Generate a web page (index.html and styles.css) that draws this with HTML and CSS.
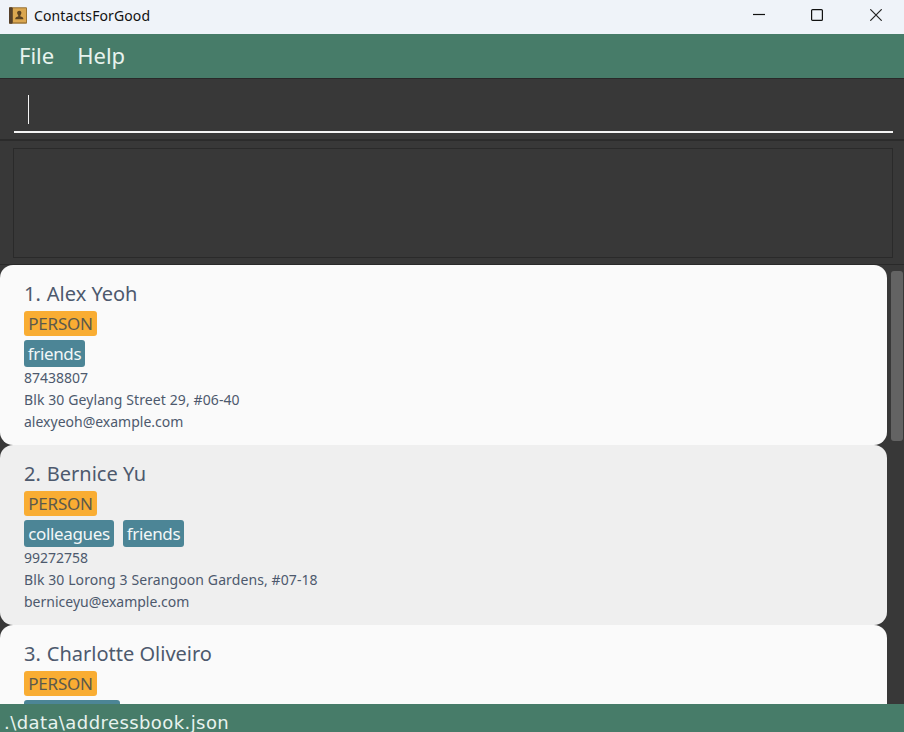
FILE: index.html
```html
<!DOCTYPE html>
<html lang="en">
<head>
<meta charset="utf-8">
<title>ContactsForGood</title>
<link rel="stylesheet" href="styles.css">
</head>
<body>
<div class="window">
  <header class="titlebar">
    <svg class="app-icon" width="18" height="17" viewBox="0 0 18 17">
      <rect x="0" y="0.3" width="18" height="16.4" rx="1" fill="#9c7434"/>
      <rect x="0" y="0.3" width="3.6" height="16.4" rx="1" fill="#55402b"/>
      <rect x="4" y="1.3" width="13" height="14" fill="#dba750"/>
      <path d="M10.300 3.800c1.500 0 2.200 1 2.100 2.300-.1 1-.6 1.700-1 2.100v1.300c1.700.4 3 .9 3 2.800H6.200c0-1.900 1.300-2.400 3-2.800V8.200c-.5-.4-1-1.100-1.100-2.100-.1-1.300.7-2.300 2.200-2.300z" fill="#5c4322"/>
    </svg>
    <span class="title">ContactsForGood</span>
    <div class="controls">
      <svg width="12" height="12" viewBox="0 0 12 12"><path d="M0 5.500h12" stroke="#111" stroke-width="1.200"/></svg>
      <svg width="12" height="12" viewBox="0 0 12 12"><rect x=".6" y=".6" width="10.800" height="10.800" rx="1" fill="none" stroke="#111" stroke-width="1.200"/></svg>
      <svg class="close" width="12" height="12" viewBox="0 0 12 12"><path d="M.3.300l11.400 11.400M11.700.300L.3 11.700" stroke="#222" stroke-width="1.200"/></svg>
    </div>
  </header>
  <nav class="menubar"><span class="file">File</span><span class="help">Help</span></nav>
  <section class="command"><div class="field"><i class="caret"></i></div></section>
  <section class="result"><div class="result-box"></div></section>
  <main class="content">
    <div class="list">
      <article class="card">
        <h2 class="name"><span class="index">1.</span>Alex Yeoh</h2>
        <div class="type">PERSON</div>
        <div class="tags"><span class="tag friends">friends</span></div>
        <p class="phone">87438807</p>
        <p class="address">Blk 30 Geylang Street 29, #06-40</p>
        <p class="email">alexyeoh@example.com</p>
      </article>
      <article class="card alt">
        <h2 class="name"><span class="index">2.</span>Bernice Yu</h2>
        <div class="type">PERSON</div>
        <div class="tags"><span class="tag colleagues">colleagues</span><span class="tag friends">friends</span></div>
        <p class="phone">99272758</p>
        <p class="address">Blk 30 Lorong 3 Serangoon Gardens, #07-18</p>
        <p class="email">berniceyu@example.com</p>
      </article>
      <article class="card">
        <h2 class="name"><span class="index">3.</span>Charlotte Oliveiro</h2>
        <div class="type">PERSON</div>
        <div class="tags"><span class="tag clipped"></span></div>
      </article>
    </div>
    <div class="scrollbar"><div class="thumb"></div></div>
  </main>
  <footer class="status">.\data\addressbook.json</footer>
</div>
</body>
</html>
```
FILE: styles.css
```css
* { box-sizing: border-box; }
body { margin: 0; background: #383838; font-family: "Noto Sans", sans-serif; }
.window { width: 904px; height: 732px; display: flex; flex-direction: column; overflow: hidden; background: #383838; }

.titlebar { flex: none; height: 34px; background: #eff3f9; display: flex; align-items: center; padding: 0 22px 4px 9px; color: #111; }
.app-icon { margin-right: 7px; }
.title { font-size: 14px; line-height: 20px; letter-spacing: 0.1px; padding-top: 1px; }
.controls { margin-left: auto; display: flex; gap: 46px; }
.controls svg { display: block; }
.controls .close { margin-left: 1px; }

.menubar { flex: none; height: 44px; background: #477c69; color: #e8f3ee; font-size: 22px; line-height: 43px; display: flex; gap: 23px; padding-left: 19px; }

.command { flex: none; height: 61px; border-top: 1px solid #292929; padding: 0 11px 0 14px; }
.field { height: 54px; border-bottom: 2px solid #f4f4f4; padding: 16px 0 0 14px; }
.caret { display: block; width: 1px; height: 29px; background: #f4f4f4; }

.result { flex: none; height: 126px; border-top: 2px solid #2b2b2b; border-bottom: 1px solid #292929; padding: 7px 11px 6px 13px; }
.result-box { height: 110px; border: 1px solid #2a2a2a; }

.content { flex: 1; min-height: 0; display: flex; }
.list { width: 887px; overflow: hidden; }
.card { height: 180px; padding: 14px 24px; border-radius: 13px; background: #fafafa; color: #4d596d; }
.alt { background: #efefef; }
.name { margin: 0; font-size: 20px; font-weight: 400; line-height: 29px; height: 32px; display: flex; gap: 6px; }
.type { width: 73px; height: 25px; border-radius: 3px; background: #f9ad33; color: #5c594b; font-size: 17px; line-height: 25px; text-align: center; letter-spacing: -0.2px; white-space: nowrap; }
.tags { display: flex; gap: 9px; margin-top: 4px; height: 27px; }
.tag { height: 27px; border-radius: 3px; background: #4c8596; color: #f2f7f8; font-size: 17px; line-height: 27px; letter-spacing: -0.350px; text-align: center; white-space: nowrap; }
.friends { width: 61px; }
.colleagues { width: 90px; }
.clipped { width: 96px; }
.card p { margin: 0; font-size: 14px; line-height: 22px; white-space: nowrap; }
.card .address { letter-spacing: 0.1px; }

.scrollbar { flex: 1; padding: 6px 1px 0 4px; }
.thumb { height: 170px; border-radius: 3px; background: #636363; }

.status { flex: none; height: 28px; background: #477c69; color: #e8f3ee; font: 18px/38px "DejaVu Sans", sans-serif; letter-spacing: 0.420px; padding-left: 4px; }
```
